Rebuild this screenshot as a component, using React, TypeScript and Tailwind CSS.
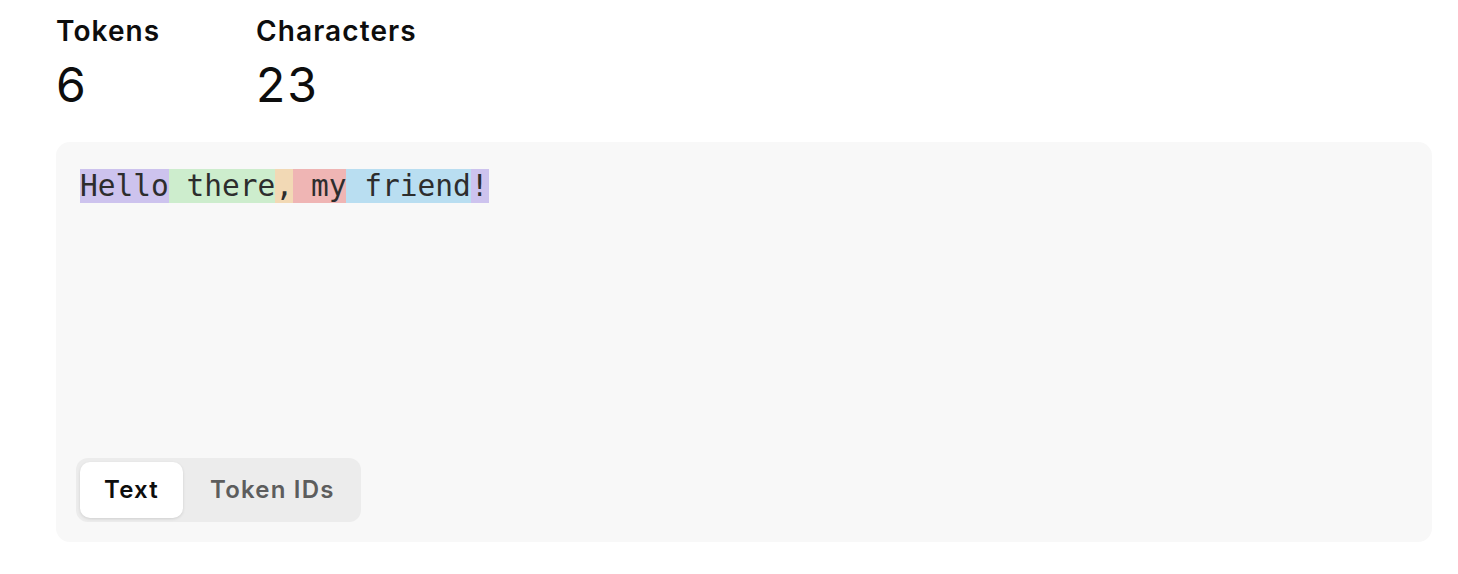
const tokens = [
  { text: 'Hello', color: 'bg-[#cdc3ee]' },
  { text: ' there', color: 'bg-[#cdedcd]' },
  { text: ',', color: 'bg-[#f2d9b5]' },
  { text: ' my', color: 'bg-[#efb5b4]' },
  { text: ' friend', color: 'bg-[#b9def1]' },
  { text: '!', color: 'bg-[#cdc3ee]' },
]

export default function App() {
  const stats = [
    { label: 'Tokens', value: 6 },
    { label: 'Characters', value: 23 },
  ]

  return (
    <div className="min-h-screen bg-white pl-[56px] pt-[14px] text-[#0d0d0d] font-['Inter',sans-serif]">
      <div className="flex">
        {stats.map((s) => (
          <div key={s.label} className="w-[200px]">
            <div className="text-[28px] font-semibold leading-[34px] tracking-[1.1px]">{s.label}</div>
            <div className="mt-[13px] text-[48px] leading-[48px] font-normal tracking-[2px]">{s.value}</div>
          </div>
        ))}
      </div>

      <div className="mt-[33px] flex h-[400px] w-[1376px] flex-col rounded-[14px] bg-[#f8f8f8] pb-[20px] pl-[20px] pt-[27px]">
        <div className="flex-1 pl-[4px]">
          <div className="whitespace-pre font-['DejaVu_Sans_Mono',monospace] text-[29.5px] leading-[35px] text-[#2d2d2d]">
            {tokens.map((t, i) => (
              <span key={i} className={t.color}>
                {t.text}
              </span>
            ))}
          </div>
        </div>

        <div className="flex w-fit rounded-[12px] bg-[#ececec] p-[4px]">
          <button className="h-[56px] rounded-[10px] bg-white px-[24px] text-[24px] font-semibold tracking-[1.2px] text-[#0d0d0d] shadow-[0_1px_3px_rgba(0,0,0,0.12)]">
            Text
          </button>
          <button className="h-[56px] rounded-[10px] pl-[27px] pr-[22px] text-[24px] font-semibold tracking-[1.2px] text-[#5d5d5d]">
            Token IDs
          </button>
        </div>
      </div>
    </div>
  )
}
